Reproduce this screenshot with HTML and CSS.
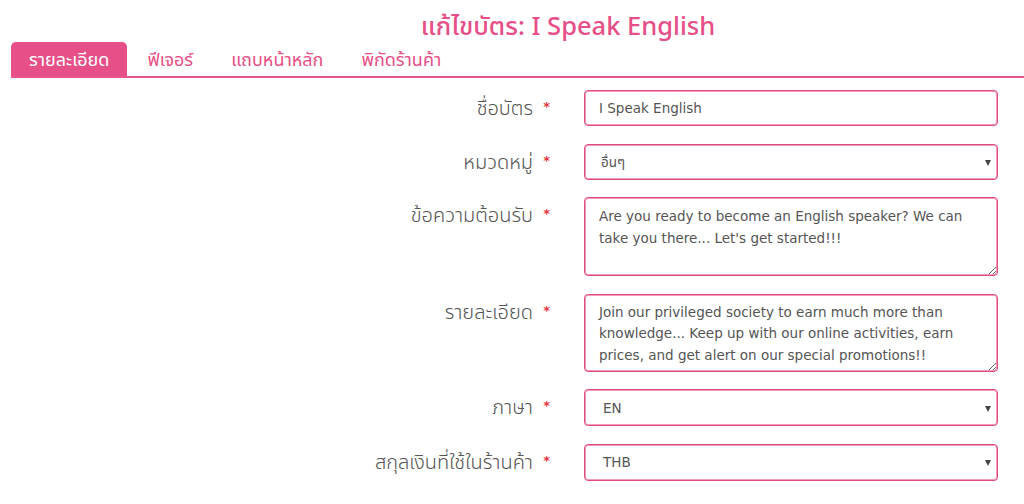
FILE: index.html
```html
<!DOCTYPE html>
<html lang="th">
<head>
<meta charset="utf-8">
<title>แก้ไขบัตร: I Speak English</title>
<link rel="stylesheet" href="styles.css">
</head>
<body>
<header class="page-head">
  <h1 class="page-title">แก้ไขบัตร: I Speak English</h1>
</header>
<nav class="tabs">
  <a class="tab active">รายละเอียด</a>
  <a class="tab">ฟีเจอร์</a>
  <a class="tab">แถบหน้าหลัก</a>
  <a class="tab">พิกัดร้านค้า</a>
</nav>
<form class="card-form">
  <div class="row">
    <label class="lbl">ชื่อบัตร <span class="req">*</span></label>
    <input class="ctl" type="text" value="I Speak English">
  </div>
  <div class="row">
    <label class="lbl">หมวดหมู่ <span class="req">*</span></label>
    <div class="sel-wrap"><select class="ctl sel"><option>อื่นๆ</option></select></div>
  </div>
  <div class="row">
    <label class="lbl">ข้อความต้อนรับ <span class="req">*</span></label>
    <textarea class="ctl area area-1">Are you ready to become an English speaker? We can take you there... Let's get started!!!</textarea>
  </div>
  <div class="row">
    <label class="lbl">รายละเอียด <span class="req">*</span></label>
    <textarea class="ctl area area-2">Join our privileged society to earn much more than knowledge... Keep up with our online activities, earn prices, and get alert on our special promotions!!</textarea>
  </div>
  <div class="row">
    <label class="lbl">ภาษา <span class="req">*</span></label>
    <div class="sel-wrap"><select class="ctl sel sel-b"><option>EN</option></select></div>
  </div>
  <div class="row">
    <label class="lbl">สกุลเงินที่ใช้ในร้านค้า <span class="req">*</span></label>
    <div class="sel-wrap"><select class="ctl sel sel-b"><option>THB</option></select></div>
  </div>
</form>
</body>
</html>
```
FILE: styles.css
```css
* { box-sizing: border-box; }
html, body { margin: 0; padding: 0; background: #fff; }
body {
  font-family: "Noto Sans", "Noto Sans Thai", "Loma", sans-serif;
  color: #555;
  width: 1024px;
  height: 504px;
  overflow: hidden;
}
.page-head { padding-top: 8px; padding-left: 112px; text-align: center; }
.page-title {
  margin: 0;
  font-size: 25.5px;
  line-height: 34px;
  font-weight: 500;
  color: #e64f88;
}
.tabs {
  display: flex;
  margin-left: 11px;
  border-bottom: 2px solid #e8558c;
  height: 36px;
}
.tab {
  display: block;
  padding: 0 18px;
  margin-right: 2px;
  font-size: 18px;
  line-height: 34px;
  color: #e64f88;
  border-radius: 5px 5px 0 0;
}
.tab.active { background: #e64f88; color: #fff; }
.card-form {
  margin-top: 12px;
  display: flex;
  flex-direction: column;
  gap: 17.5px;
  padding-right: 26px;
}
.row {
  display: grid;
  grid-template-columns: 1fr 414px;
  column-gap: 33px;
  align-items: start;
}
.lbl {
  display: block;
  text-align: right;
  font-size: 20px;
  line-height: 36px;
  height: 36px;
  padding-right: 1px;
  font-weight: 300;
  color: #555;
}
.req {
  color: #e3343f;
  font-family: "DejaVu Sans", sans-serif;
  font-size: 13px;
  font-weight: 700;
  line-height: 1;
  margin-left: 5px;
  vertical-align: 4px;
}
.ctl {
  display: block;
  width: 414px;
  height: 36px;
  margin: 0;
  border: 1px solid #e34a84;
  box-shadow: inset 0 0 0 1px #f19bbb;
  border-radius: 4px;
  background: #fff;
  padding: 0 14px;
  font-family: "DejaVu Sans", "Noto Sans Thai", sans-serif;
  font-size: 13.5px;
  color: #555;
  outline: none;
}
.sel-wrap { position: relative; }
.sel-wrap::after {
  content: "";
  position: absolute;
  right: 7px;
  top: 50%;
  margin-top: -2px;
  border-left: 3px solid transparent;
  border-right: 3px solid transparent;
  border-top: 6px solid #444;
}
.sel { appearance: none; -webkit-appearance: none; padding-left: 16px; }
.sel-b { height: 37px; padding-left: 18px; }
.area {
  resize: vertical;
  padding: 7px 14px 5px;
  line-height: 22px;
  height: 79px;
}
.area-2 { height: 78px; line-height: 21.5px; padding-top: 7px; }
```
